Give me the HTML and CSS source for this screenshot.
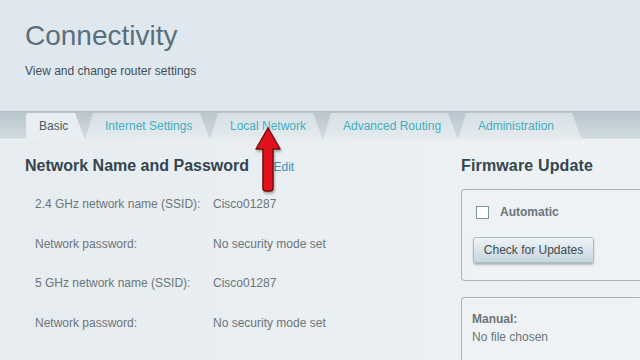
FILE: index.html
```html
<!DOCTYPE html>
<html lang="en">
<head>
  <meta charset="UTF-8" />
  <title>Connectivity</title>
  <link rel="stylesheet" href="styles.css">
</head>
<body>

  <header class="top">
    <h1>Connectivity</h1>
    <p>View and change router settings</p>
  </header>

  <nav class="tabs">
    <a class="tab active" href="#basic">Basic</a>
    <a class="tab t-internet" href="#internet">Internet Settings</a>
    <a class="tab t-local" href="#local">Local Network</a>
    <a class="tab t-routing" href="#routing">Advanced Routing</a>
    <a class="tab t-admin" href="#admin">Administration</a>
  </nav>

  <main class="content">
    <section class="left">
      <h2>Network Name and Password <a href="#edit" class="edit">Edit</a></h2>
      <div class="row"><span class="label">2.4 GHz network name (SSID):</span><span>Cisco01287</span></div>
      <div class="row"><span class="label">Network password:</span><span>No security mode set</span></div>
      <div class="row"><span class="label">5 GHz network name (SSID):</span><span>Cisco01287</span></div>
      <div class="row"><span class="label">Network password:</span><span>No security mode set</span></div>
    </section>

    <section class="right">
      <h2>Firmware Update</h2>
      <div class="box">
        <label class="check"><span class="tick"></span>Automatic</label>
        <button class="btn">Check for Updates</button>
      </div>
      <div class="box manual">
        <b>Manual:</b>
        <p>No file chosen</p>
      </div>
    </section>
  </main>

  <!-- red pointer arrow -->
  <svg class="arrow" width="30" height="70" viewBox="0 0 30 70">
    <path d="M15 2 L27 23 L20 23 L20 62 Q20 65 17 65 L13 65 Q10 65 10 62 L10 23 L3 23 Z"
          fill="#e0121c" stroke="#7a0a0a" stroke-width="1.5" stroke-linejoin="round"/>
  </svg>

</body>
</html>
```

FILE: styles.css
```css
*{margin:0;padding:0;box-sizing:border-box;}
body{font-family:"Liberation Sans",Arial,sans-serif;background:#e6ecf0;color:#6b757a;width:640px;height:360px;overflow:hidden;position:relative;}

.top{background:#dfe8ee;height:112px;padding:19px 25px 0;border-bottom:1px solid #b3bec5;}
.top h1{font-weight:normal;font-size:28px;line-height:34px;color:#5b6f7b;}
.top p{font-size:12px;color:#3e4f59;margin-top:11px;}

.tabs{display:flex;height:28px;padding-left:26px;background:linear-gradient(#b9c5cc,#d3dde2);border-bottom:1px solid #f4f7f8;}
.tab{display:flex;align-items:center;flex:none;white-space:nowrap;height:27px;margin-top:1px;padding:0 0 2px 20px;font-size:12px;color:#42aebf;text-decoration:none;background:linear-gradient(#d5dfe4,#e6ecf0);clip-path:polygon(0 100%,8px 0,calc(100% - 10px) 0,100% 100%);}
.t-internet{width:125px;}
.t-local{width:113px;}
.t-routing{width:135px;}
.t-admin{width:124px;}
.tab.active{color:#4a5860;background:#e8eef1;width:59px;padding-left:13px;border-top-left-radius:3px;clip-path:polygon(0 100%,0 0,calc(100% - 10px) 0,100% 100%);}

.content{display:flex;padding:0 0 0 25px;background:linear-gradient(90deg,#e6ecf0,#eef2f4);height:220px;}
.left{width:436px;}
.right{flex:1;}
h2{font-size:16px;color:#34454f;font-weight:bold;margin-top:17px;height:18px;line-height:18px;}
.right h2{letter-spacing:0.15px;}
.edit{font-size:12px;font-weight:normal;color:#3c8ec6;text-decoration:none;margin-left:20px;}

.left h2{margin-bottom:13px;}
.row{display:flex;font-size:12px;height:39.5px;line-height:16px;padding:8px 0 0 10px;}
.label{width:178px;}

.box{border:1px solid #a8b4ba;border-right:none;border-radius:4px 0 0 4px;background:#eef2f4;margin-top:14px;height:92px;padding:15px 0 0 11px;}
.check{display:flex;align-items:center;font-size:12px;font-weight:bold;color:#6b757a;}
.tick{width:13px;height:13px;border:1px solid #7c95a3;background:#fff;margin:0 11px 0 3px;}
.btn{margin-top:18px;font-family:inherit;font-size:12px;color:#3f4b52;width:121px;height:26px;border:1px solid #a9bcc6;border-radius:3px;background:linear-gradient(#eef4f7,#c6d6de);box-shadow:0 2px 2px rgba(60,80,90,0.35);}

.manual{margin-top:16px;height:80px;padding:14px 0 0 10px;font-size:12px;}
.manual b{display:block;color:#6b757a;}
.manual p{margin-top:4px;}

.arrow{position:absolute;left:253px;top:126px;filter:drop-shadow(1px 2px 1px rgba(0,0,0,0.3));}
```
